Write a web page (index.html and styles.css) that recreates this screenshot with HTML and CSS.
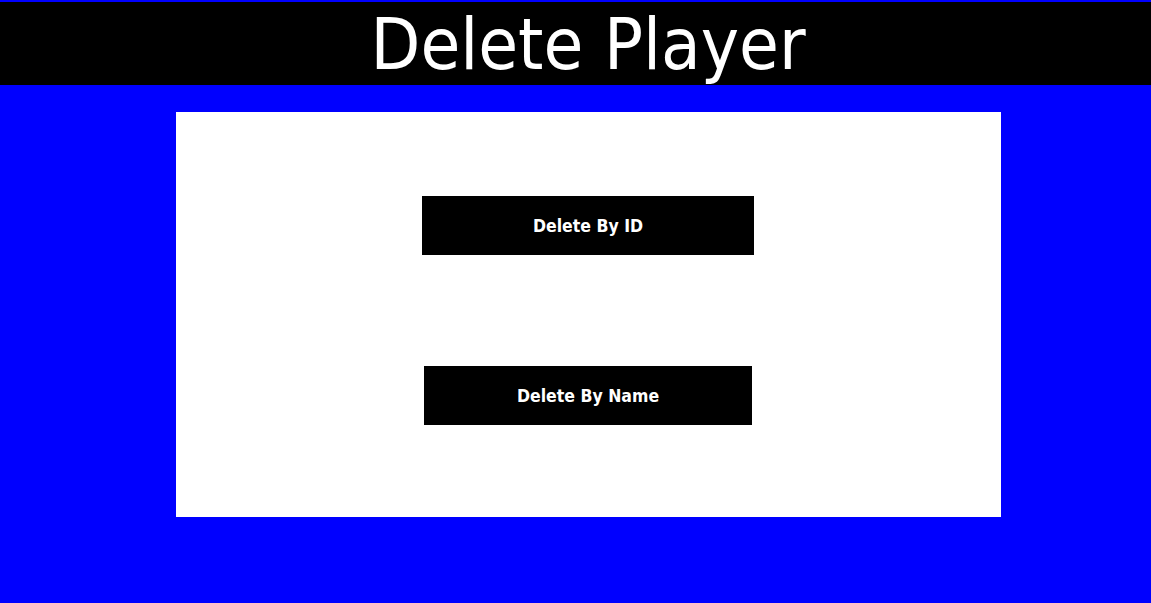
FILE: index.html
```html
<!DOCTYPE html>
<html>
<head>
<meta charset="utf-8">
<link rel="stylesheet" href="styles.css">
</head>
<body>
<header class="topbar"><h1 class="title">Delete Player</h1></header>
<main class="card">
  <button class="btn btn-id">Delete By ID</button>
  <button class="btn btn-name">Delete By Name</button>
</main>
</body>
</html>
```
FILE: styles.css
```css
html, body {
  margin: 0;
  padding: 0;
  background: #0000ff;
  height: 100%;
  overflow: hidden;
  font-family: "DejaVu Sans Condensed", "DejaVu Sans", sans-serif;
}
.topbar {
  margin-top: 2px;
  height: 83px;
  background: #000;
  display: flex;
  justify-content: center;
  padding-left: 25px;
  box-sizing: border-box;
  overflow: hidden;
}
.title {
  margin: 0;
  color: #fff;
  font-weight: normal;
  font-size: 72px;
  line-height: 84px;
}
.card {
  margin: 27px 0 0 176px;
  width: 825px;
  height: 405px;
  background: #fff;
  box-sizing: border-box;
  padding: 84px 1px 0 0;
  display: flex;
  flex-direction: column;
  align-items: center;
  gap: 111px;
}
.btn {
  height: 59px;
  border: none;
  background: #000;
  color: #fff;
  font-family: inherit;
  font-size: 17.5px;
  font-weight: bold;
  padding: 0;
  cursor: pointer;
}
.btn-id { width: 332px; }
.btn-name { width: 328px; }
```
